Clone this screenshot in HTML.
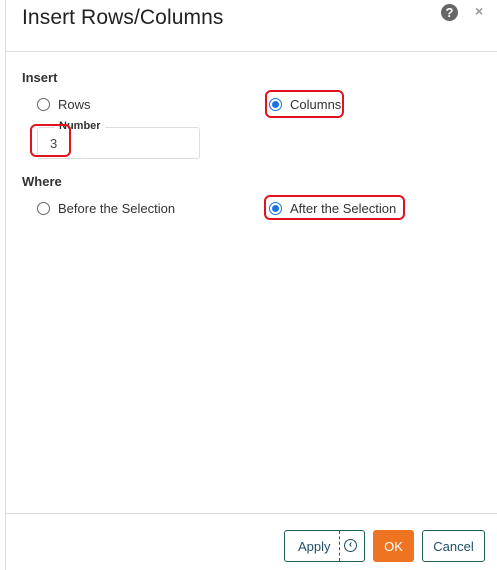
<!DOCTYPE html>
<html><head><style>
*{margin:0;padding:0;box-sizing:border-box}
body{width:497px;height:570px;background:#fff;font-family:"Liberation Sans",sans-serif;position:relative;overflow:hidden;color:#333}
.a{position:absolute}
.rad{position:absolute;width:13px;height:13px;border:1px solid #666;border-radius:50%;background:#fff}
.rad.on{border:1.5px solid #1a73e8}
.rad.on::after{content:"";position:absolute;left:2px;top:2px;width:7px;height:7px;border-radius:50%;background:#1a73e8}
.lbl{position:absolute;font-size:13px;color:#333}
.red{position:absolute;border:2px solid #e0141e;border-radius:6px}
.btn{position:absolute;top:530px;height:32px;border:1px solid #1f5f55;border-radius:3px;font-size:13px;color:#1f4f66;display:flex;align-items:center;justify-content:center}
</style></head><body>
<div class="a" style="left:5px;top:0;width:1px;height:570px;background:#ddd"></div>
<div class="a" style="left:6px;top:51px;width:491px;height:1px;background:#ddd"></div>
<div class="a" style="left:6px;top:513px;width:491px;height:1px;background:#ddd"></div>
<div class="a" style="left:22px;top:6px;font-size:21px;color:#222;letter-spacing:0.1px">Insert Rows/Columns</div>
<div class="a" style="left:441px;top:4px;width:17px;height:17px;border-radius:50%;background:#666;color:#fff;font-size:13px;font-weight:bold;text-align:center;line-height:17px">?</div>
<div class="a" style="left:475px;top:3px;font-size:14px;color:#999;font-weight:bold">×</div>
<div class="a" style="left:22px;top:70px;font-size:13px;font-weight:bold;color:#333">Insert</div>
<div class="rad" style="left:37px;top:98px"></div><div class="lbl" style="left:58px;top:97px">Rows</div>
<div class="rad on" style="left:269px;top:98px"></div><div class="lbl" style="left:290px;top:97px">Columns</div>
<div class="red" style="left:265px;top:90px;width:79px;height:28px"></div>
<div class="a" style="left:37px;top:127px;width:163px;height:32px;border:1px solid #ddd;border-radius:3px"></div>
<div class="a" style="left:55px;top:120px;padding:0 4px;background:#fff;font-size:11px;font-weight:bold;color:#333">Number</div>
<div class="a" style="left:50px;top:136px;font-size:13px;color:#444">3</div>
<div class="red" style="left:30px;top:124px;width:41px;height:33px"></div>
<div class="a" style="left:22px;top:174px;font-size:13px;font-weight:bold;color:#333">Where</div>
<div class="rad" style="left:37px;top:202px"></div><div class="lbl" style="left:58px;top:201px">Before the Selection</div>
<div class="rad on" style="left:269px;top:202px"></div><div class="lbl" style="left:290px;top:201px">After the Selection</div>
<div class="red" style="left:264px;top:195px;width:141px;height:25px"></div>
<div class="btn" style="left:284px;width:81px;justify-content:flex-start;padding-left:13px">Apply
<div class="a" style="left:54px;top:0;height:30px;border-left:1px dashed #1f5f55"></div>
<div class="a" style="left:59px;top:8px;width:13px;height:13px;border:1.5px solid #1f4f66;border-radius:50%;font-size:10px;line-height:10px;text-align:center;font-weight:bold">‹</div>
</div>
<div class="btn" style="left:373px;width:41px;background:#ee7421;border-color:#ee7421;color:#fff">OK</div>
<div class="btn" style="left:422px;width:63px">Cancel</div>
</body></html>
